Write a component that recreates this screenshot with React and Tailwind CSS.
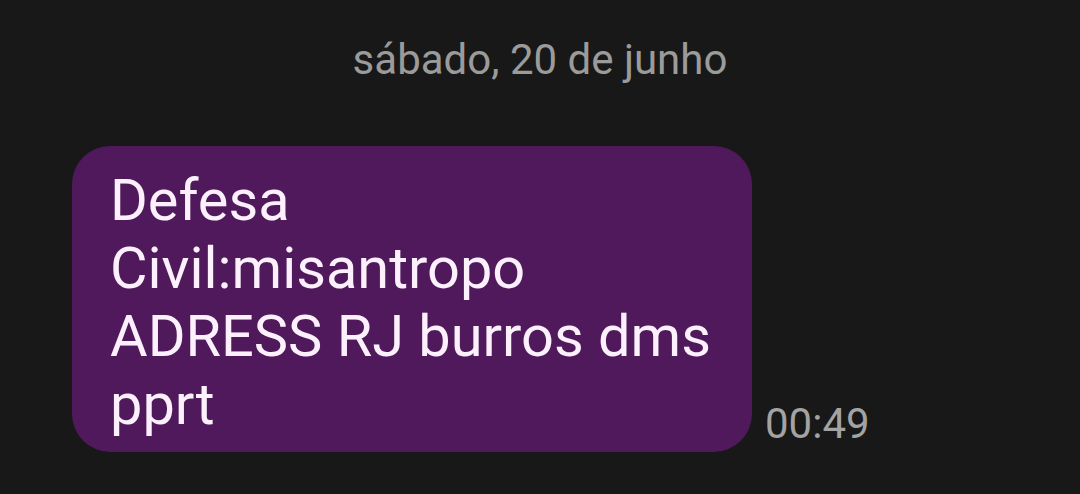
const App = () => {
  return (
    <div className="w-[1080px] h-[494px] bg-[#181818] overflow-hidden font-['Roboto',sans-serif]">
      <div className="pt-[35px] text-center text-[42px] leading-[50px] text-[#9b9b9b]">
        sábado, 20 de junho
      </div>
      <div className="mt-[61px] pl-[72px] flex items-end gap-[13px]">
        <div className="w-[680px] bg-[#4f195b] rounded-[38px] pl-[38px] pr-[38px] pt-[20px] pb-[14px] text-[57.7px] leading-[68px] text-[#fbf0fc]">
          Defesa Civil:misantropo ADRESS RJ burros dms pprt
        </div>
        <div className="text-[42px] leading-[48px] text-[#a3a3a3] mb-[4px]">00:49</div>
      </div>
    </div>
  )
}

export default App
